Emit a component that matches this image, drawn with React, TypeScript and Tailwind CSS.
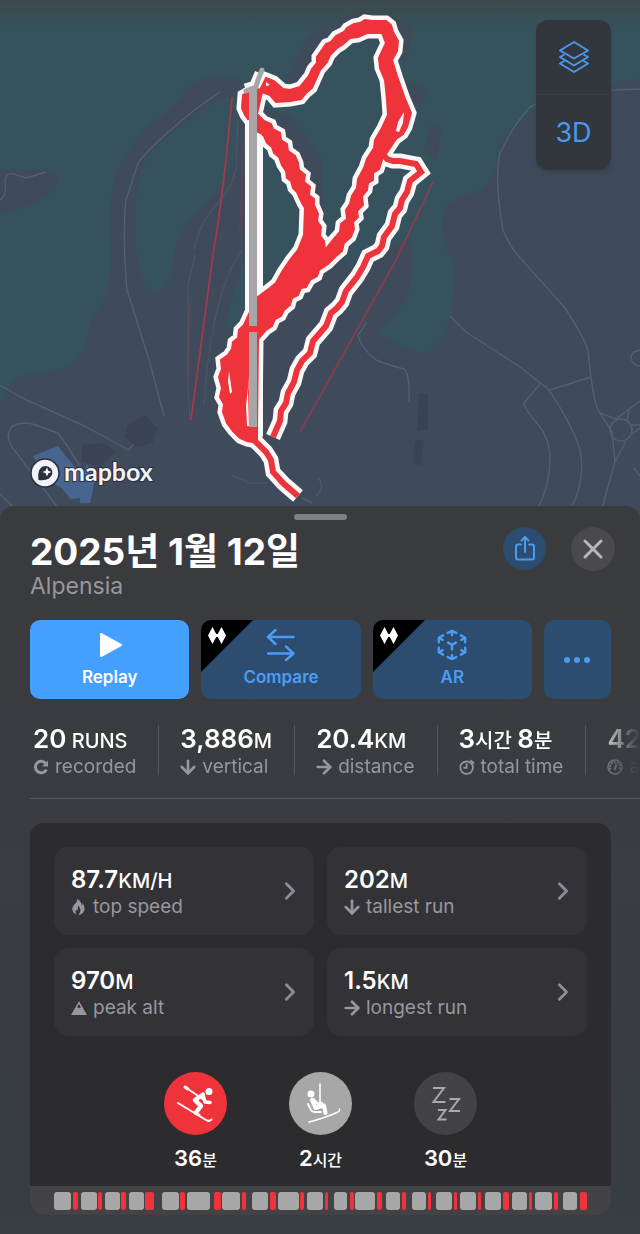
import type { ReactNode } from "react"
import { ArrowDown, ArrowRight, ChevronRight, X } from "lucide-react"

type Stat = { id: string; parts: [string, string][]; label: string; icon: ReactNode }

const RedoIcon = () => (
    <svg viewBox="0 0 16 16" className="size-4" fill="none" stroke="currentColor" strokeWidth="3">
        <path d="M13.4 10.6A5.8 5.8 0 1 1 12.6 4.2" />
        <path d="M15 1.5V7.6H9Z" fill="currentColor" stroke="none" />
    </svg>
)

const TimerIcon = () => (
    <svg viewBox="0 0 16 16" className="size-4" fill="none" stroke="currentColor" strokeWidth="1.7">
        <circle cx="7.6" cy="8.6" r="6.3" />
        <path d="M7.6 4.5V8.8H4.4M11.5 1.2L15 4.6M12.8 3.8L14.2 2.4" />
    </svg>
)

const GaugeIcon = () => (
    <svg viewBox="0 0 16 16" className="size-4" fill="none" stroke="currentColor" strokeWidth="1.5">
        <circle cx="8" cy="8" r="7" />
        <path d="M3.6 10.5A5 5 0 1 1 12.4 10.5" strokeWidth="2" strokeDasharray="2 1" />
        <path d="M7.6 11L9.4 5.4" strokeWidth="2" />
    </svg>
)

const FlameIcon = () => (
    <svg viewBox="0 0 16 18" className="h-[18px] w-4" fill="currentColor">
        <path d="M6 1C7 4.7 2 6.3 1.4 10.2C1 13.2 3 15.600 5.500 16.400C4.300 14.600 4.200 13 5.200 11.400C5.600 12.600 6.200 12.800 6.600 12C7.400 10.400 6.400 9.200 7.800 7.400C8.200 10 9.700 10.400 9.400 12.800C9.200 14.600 8.400 15.600 7.400 17C11.400 16 13.600 13.800 13.600 10.400C13.600 8.400 12.300 7.200 11.800 4.800C11.200 6.200 11.400 7.200 11 7.800C10.200 5.600 10 2.600 6 1Z" />
    </svg>
)

const PeakIcon = () => (
    <svg viewBox="0 0 16 16" className="size-4">
        <path d="M8 1L16 15H0Z" fill="currentColor" />
        <path d="M8 4L10.2 7.8L9 7.2L8 8.4L7 7.2L5.8 7.8Z" fill="#333236" />
    </svg>
)

const DownIcon = () => <ArrowDown className="size-4" strokeWidth={3} viewBox="3 3 18 18" />
const RightIcon = () => <ArrowRight className="size-4" strokeWidth={3} viewBox="3 3 18 18" />

const stats: Stat[] = [
    { id: "runs", parts: [["20", " RUNS"]], label: "recorded", icon: <RedoIcon /> },
    { id: "vertical", parts: [["3,886", "M"]], label: "vertical", icon: <DownIcon /> },
    { id: "distance", parts: [["20.4", "KM"]], label: "distance", icon: <RightIcon /> },
    { id: "time", parts: [["3", "시간 "], ["8", "분"]], label: "total time", icon: <TimerIcon /> },
    { id: "speed", parts: [["42.1", "KM/H"]], label: "avg speed", icon: <GaugeIcon /> },
]

const tiles: Stat[] = [
    { id: "top", parts: [["87.7", "KM/H"]], label: "top speed", icon: <FlameIcon /> },
    { id: "tallest", parts: [["202", "M"]], label: "tallest run", icon: <DownIcon /> },
    { id: "peak", parts: [["970", "M"]], label: "peak alt", icon: <PeakIcon /> },
    { id: "longest", parts: [["1.5", "KM"]], label: "longest run", icon: <RightIcon /> },
]

// One entry per lift + run: lift, pause, run, pause
const timeline = [
    [17, 2, 5, 3], [16, 1, 4, 3], [15, 1, 5, 3], [15, 1, 9, 8], [17, 1, 5, 2],
    [23, 4, 7, 1], [18, 2, 4, 6], [16, 2, 6, 2], [21, 1, 4, 3], [16, 2, 3, 6],
    [13, 3, 4, 1], [20, 2, 5, 4], [14, 2, 4, 6], [14, 2, 3, 5], [16, 2, 3, 3],
    [16, 2, 3, 4], [16, 2, 6, 3], [15, 2, 3, 3], [17, 2, 4, 5], [14, 3, 7, 0],
]

// Outline of the merged runs, then the ground they enclose
const runs =
    "M266 78L274 81L283 89L290 90L300 87L309 76L312 69L317 63V57L326 44L331 42L336 36L344 32L347 28L354 24L360 23L365 20L372 21H386L391 25L393 32L398 41L397 51L392 60L397 76L405 99L411 113L407 127L403 134L396 139L388 151L382 160L379 169L373 173L373 180L368 183L367 190L362 196L363 205L357 211L358 217L353 222L354 229L351 237L344 243L342 251L336 256L328 264L319 270L317 276L310 280L306 287L301 288L298 295L292 298L290 305L284 310L281 316L275 319L272 326L266 330L258 339L257 428L257 443L247 441L240 438L233 431L227 423L223 412L224 404L220 397L222 388L219 377L222 369L221 360L228 355L232 349L233 342L238 338L239 330L244 325L250 312L258 297L270 288L276 283L282 272L290 260L298 250L304 235L305 208L302 203L297 192L293 188L291 181L287 178L286 171L282 165L279 157L274 153L272 147L267 143L264 136L258 132L245 115L242 108L243 95L255 88L260 90Z" +
    "M262 92L270 95L276 102L290 101L301 99L306 93L312 88L316 79L320 70L327 62L330 55L337 48L342 45L350 38L358 37L367 33H382L386 43L379 58L380 68L385 80L387 100L388 115L382 128L375 140L374 148L367 159L364 168L358 179L357 188L352 196L350 204L346 210L347 219L341 224L340 232L333 240L325 250L324 241L320 236L321 227L317 221L318 214L314 205L314 199L309 195L310 187L304 182L305 175L299 170L298 163L295 156L288 151L287 144L281 140L280 133L273 129L271 124L264 121L257 114Z"

const spur = "M383 154L387 159L393 161L400 161L416 164L421 172L410 181L407 192L402 200L400 208L395 214L392 226L384 237L382 246L378 251L368 256L363 267L357 277L346 291L342 302L337 308L331 313L326 326L320 333L313 341L310 353L302 361L297 370L294 382L288 393L286 403L281 411L280 421L273 437"
const tail = "M254 440L266 452L271 460L273 472L284 484L298 496"

const TrailMap = () => (
    <svg viewBox="0 0 640 524" className="block h-auto w-full" role="img" aria-label="Ski tracks">
        <defs>
            <linearGradient id="fade" x1="0" y1="0" x2="0" y2="1">
                <stop offset="0" stopColor="#3c494b" />
                <stop offset="1" stopColor="#3c494b" stopOpacity="0" />
            </linearGradient>
        </defs>
        <rect width="640" height="524" fill="#36525c" />

        {/* open ground */}
        <g fill="#3f4a5b">
            <path d="M0 410Q6 378 28 375L62 369Q82 362 88 335Q90 318 102 304Q112 292 111 250Q108 190 118 172Q126 150 150 125Q176 108 190 86Q202 74 240 79L250 300L330 250L345 210L380 150L395 165L360 240L345 268L385 250L410 235Q416 265 409 285Q406 310 380 328Q374 332 390 340Q412 352 423 354Q444 346 450 318Q456 290 455 266Q436 232 446 208Q452 198 480 191Q496 178 500 150Q506 130 530 112Q560 92 600 88Q625 78 640 80V524H0Z" />
            <path d="M0 170L45 170Q62 174 57 184Q46 204 0 214Z" />
            <path d="M310 34L360 10L390 16L415 28L405 60L340 70L300 90L285 80Z" />
            <path d="M405 80L428 90L420 108L405 102ZM430 125L442 128L436 160L424 150Z" />
            <path d="M262 110L290 115L322 160L328 250L310 220L290 160Z" />
        </g>
        <g fill="#36525c">
            <path d="M143 163Q160 140 190 118L215 101L238 96V150Q230 178 207 203Q182 226 176 245Q172 290 155 293Q140 290 137 255Q130 200 143 163Z" />
            <path d="M262 135L285 170L303 205L302 235L285 265L262 290ZM246 250V312L229 335L226 320Z" />
            <path d="M378 40L385 85V112L350 180L328 240L322 200L322 160L300 125L290 112L305 100L350 42Z" />
            <path d="M366 190L385 165L412 170L395 205L366 250L345 262Z" />
        </g>
        <g fill="#3a4355">
            <path d="M128 425L145 415L157 428L153 442L138 447L124 437Z" />
            <path d="M82 445L104 443L116 452L100 466L82 462ZM419 393H428V430H417ZM416 440H424L420 466L412 462Z" />
        </g>
        <path d="M33 456L58 446L64 454L82 475L87 464L95 480L90 503H80V498L70 499L62 488L50 482Z" fill="#466690" />

        {/* roads */}
        <g fill="none" stroke="#56647a" strokeWidth="1.4" opacity="0.85">
            <path d="M220 92L197 108Q150 146 138 163L126 200Q122 235 127 290L150 363L164 416" />
            <path d="M0 200Q7 197 5 180Q6 172 14 174L26 178L46 172" />
            <path d="M0 385L22 398L80 424L105 437L128 450L133 445" />
            <path d="M58 508L12 447Q4 434 13 426Q25 420 38 426L58 433L66 444L80 466M0 494L14 508" />
            <path d="M367 322L358 335Q360 347 376 360Q388 365 404 369Q410 374 409 402" />
            <path d="M450 316L466 332L520 367L548 389Q572 424 580 450Q586 480 571 508M540 384L524 403Q524 408 536 422Q550 438 550 458Q550 485 538 508M550 390L591 377" />
            <path d="M640 89L590 91L548 98L530 107Q514 124 500 153Q494 180 503 230Q510 248 524 262L565 308Q588 344 588 352Q593 400 598 410L612 432L615 462L602 508" />
            <circle cx="621" cy="430" r="11" />
            <path d="M600 413L616 419L640 401M629 410L627 421M632 425H640M632 434L640 428M626 441L615 462M302 498L312 503M634 468L640 476M640 350Q631 352 631 358Q632 365 640 366" />
            <path d="M231 475L250 483H268M195 255L188 285V390L190 420M238 120L236 170Q232 188 214 208Q200 222 194 250M242 250Q212 290 204 405" opacity="0.5" />
            <path d="M318 478Q326 486 316 496" opacity="0.7" />
        </g>
        <g fill="none" stroke="#9c3b49" strokeWidth="2">
            <path d="M232 97Q224 190 213 255L191 420" />
            <path d="M433 182L396 260L300 432" opacity="0.7" />
            <path d="M245 120L240 230M190 300L188 380M296 246L280 275" opacity="0.3" />
        </g>
        <rect width="640" height="28" fill="url(#fade)" />

        {/* white casing below the tracks */}
        <g fill="none" stroke="#fbf8fa" strokeLinejoin="miter">
            <path d={runs} strokeWidth="11" />
            <path d={spur} strokeWidth="15" />
            <path d={tail} strokeWidth="15" />
            <path d="M254 110V436" strokeWidth="18" />
            <path d="M246 91L256 88L262 74" strokeWidth="15" />
        </g>
        <path d={runs} fill="#ee333b" fillRule="evenodd" stroke="#ee333b" strokeWidth="2" />
        <g fill="none" stroke="#ee333b" strokeWidth="6">
            <path d={spur} />
            <path d={tail} />
        </g>
        <path d="M404 112L398 122L396 131L399 132L403 123ZM229 371L232 392L230 394L228 381ZM250 369L248 392L249 426H247L246 406ZM266 82L270 85L266 86Z" fill="#fbf8fa" />
        <path d="M245 120V308L250 302V120ZM258 133V295L262 291V135Z" fill="#fbf8fa" />
        <g fill="none" stroke="#a5a6a5" strokeWidth="8">
            <path d="M253 88V326M253 332V427" />
            <path d="M246 91L256 87L258 80L262 70" strokeWidth="5" strokeLinecap="round" />
        </g>
    </svg>
)

const MapboxLogo = () => (
    <a href="#" className="absolute bottom-[34px] left-[30px] flex items-center gap-1">
        <svg viewBox="0 0 30 30" className="size-[30px]" aria-hidden="true">
            <circle cx="15" cy="15" r="14" fill="#f1f3f8" stroke="#29303b" strokeWidth="1.5" />
            <path d="M8.4 22Q7 11.500 12.600 8.600Q17.500 6.500 21 10.500Q24 15 20.500 19Q16.500 23 8.400 22Z" fill="#29323f" />
            <path d="M17 9.500L18.300 12.700L21.500 14L18.300 15.300L17 18.500L15.700 15.300L12.500 14L15.700 12.700Z" fill="#fff" />
        </svg>
        <span className="mb-1 font-['Lato',sans-serif] text-[25px] leading-[30px] font-bold text-[#f1f3f8] [-webkit-text-stroke:2px_#29303b] [paint-order:stroke_fill]">mapbox</span>
    </a>
)

const Value = ({ parts, size }: { parts: [string, string][]; size: "lg" | "md" }) => (
    <span className={size === "lg" ? "text-[26px] leading-7 font-semibold text-white" : "text-[24px] leading-7 font-semibold text-white"}>
        {parts.map(([num, unit]) => (
            <span key={num} className="whitespace-pre">
                {num}
                <span className="text-[20px] font-medium">{unit}</span>
            </span>
        ))}
    </span>
)

const Label = ({ icon, children }: { icon: ReactNode; children: ReactNode }) => (
    <span className="flex items-center gap-[6px] text-[19px] leading-6 whitespace-nowrap text-[#97979d]">
        {icon}
        {children}
    </span>
)

// Black corner with the double diamond of the paid tier
const ProCorner = () => (
    <svg viewBox="0 0 52 52" className="absolute top-0 left-0 size-[52px]" aria-hidden="true">
        <path d="M0 0H52L0 52Z" fill="#000" />
        <path d="M11.500 7L16 15.500L11.500 24L7 15.500ZM20.500 7L25 15.500L20.500 24L16 15.500Z" fill="#fff" />
        <path d="M14 15.500H18" stroke="#fff" strokeWidth="3" />
    </svg>
)

const actionClass =
    "relative flex flex-1 flex-col items-center overflow-hidden rounded-[10px] bg-[#2c4d70] pt-[9px] text-[17px] leading-6 font-semibold text-[#4d9cf3]"

const Activity = ({ circle, icon, value }: { circle: string; icon: ReactNode; value: [string, string] }) => (
    <li className="flex w-[63px] flex-col items-center">
        <span className={circle}>{icon}</span>
        <span className="mt-[9px] h-7 text-[22px] leading-7 font-semibold whitespace-nowrap text-white">
            {value[0]}
            <span className="text-[16px] font-medium">{value[1]}</span>
        </span>
    </li>
)

export default function App() {
    return (
        <main className="min-h-screen overflow-hidden bg-[#383d41] font-['Inter','Noto_Sans_CJK_KR',sans-serif]">
            <section className="relative">
                <TrailMap />
                <MapboxLogo />
                <div className="absolute top-5 right-[29px] flex w-[75px] flex-col rounded-xl bg-[#31373d] text-[#4b97ee] shadow-md">
                    <button type="button" aria-label="Map layers" className="flex h-[75px] items-center justify-center border-b border-[#363d43]">
                        <svg viewBox="0 0 32 34" className="h-[34px] w-8" fill="none" stroke="currentColor" strokeWidth="2" strokeLinejoin="round">
                            <path d="M16 2L30 10.500L16 18.500L2 10.500Z" />
                            <path d="M6.500 14.500L2 17L16 25.500L30 17L25.500 14.500" />
                            <path d="M6.500 21L2 23.500L16 32L30 23.500L25.500 21" />
                        </svg>
                    </button>
                    <button type="button" className="h-[75px] text-[27px] leading-8">3D</button>
                </div>
            </section>

            <section className="relative -mt-[18px] rounded-t-[14px] bg-linear-to-b from-[#3a3b3f] to-[#383d41] pt-2 pb-[19px]">
                <div className="mx-auto h-[6px] w-[53px] rounded-full bg-[#7f8084]" />

                <header className="mt-[7px] flex items-start pr-[25px] pl-[30px]">
                    <div className="flex-1 pt-[5px]">
                        <h1 className="text-[37px] leading-10 font-bold text-white">2025년 1월 12일</h1>
                        <p className="text-[23px] leading-7 text-[#97989c]">Alpensia</p>
                    </div>
                    <button type="button" aria-label="Share" className="mr-[25px] flex size-[43px] items-center justify-center rounded-full bg-[#2c4d70] text-[#4d9cf3]">
                        <svg viewBox="0 0 24 28" className="h-7 w-6" fill="none" stroke="currentColor" strokeWidth="2" strokeLinecap="round" strokeLinejoin="round">
                            <path d="M8 9.500H5Q3 9.500 3 11.500V22.500Q3 24.500 5 24.500H19Q21 24.500 21 22.500V11.500Q21 9.500 19 9.500H16M12 17V2.500M8.500 5.500L12 2L15.500 5.500" />
                        </svg>
                    </button>
                    <button type="button" aria-label="Close" className="flex size-11 items-center justify-center rounded-full bg-[#4a494d] text-[#b7b7ba]">
                        <X className="size-8" strokeWidth={2.2} />
                    </button>
                </header>

                <div className="mt-5 flex h-[79px] gap-3 pr-[29px] pl-[30px]">
                    <button type="button" className="flex flex-1 flex-col items-center rounded-[10px] bg-[#449ffe] pt-[9px] text-[17px] leading-6 font-semibold text-white">
                        <svg viewBox="0 0 32 32" className="mb-[4px] h-8 w-8" fill="currentColor" stroke="currentColor" strokeWidth="2" strokeLinejoin="round">
                            <path d="M7 5V27L27 16Z" />
                        </svg>
                        Replay
                    </button>
                    <button type="button" className={actionClass}>
                        <ProCorner />
                        <svg viewBox="0 0 32 32" className="mb-[4px] size-8" fill="none" stroke="currentColor" strokeWidth="2.400" strokeLinecap="round" strokeLinejoin="round">
                            <path d="M28.500 8H3M10.500 1L3 8L10.500 15M3 24.500H28.500M21 17.500L28.500 24.500L21 31" />
                        </svg>
                        Compare
                    </button>
                    <button type="button" className={actionClass}>
                        <ProCorner />
                        <svg viewBox="0 0 32 34" className="mb-[4px] size-8" fill="none" stroke="currentColor" strokeWidth="2.600" strokeLinecap="round" strokeLinejoin="round">
                            <path d="M11.500 4.200L16 2L20.500 4.200M16 2V6.500" />
                            <path d="M11.500 29.800L16 32L20.500 29.800M16 32V27.500" />
                            <path d="M25.500 6.800L30 9.300V14M30 9.300L26 11.500" />
                            <path d="M6.500 6.800L2 9.300V14M2 9.300L6 11.500" />
                            <path d="M25.500 27.200L30 24.700V20M30 24.700L26 22.500" />
                            <path d="M6.500 27.200L2 24.700V20M2 24.700L6 22.500" />
                            <path d="M12 14.500L16 17L20 14.500M16 17V21.500" />
                        </svg>
                        AR
                    </button>
                    <button type="button" aria-label="More" className="flex w-[67px] items-center justify-center gap-1 rounded-[10px] bg-[#2c4d70]">
                        <span className="size-[6px] rounded-full bg-[#4d9cf3]" />
                        <span className="size-[6px] rounded-full bg-[#4d9cf3]" />
                        <span className="size-[6px] rounded-full bg-[#4d9cf3]" />
                    </button>
                </div>

                <div className="mt-[18px] ml-[30px] border-b border-[#55585c] pb-[15px]">
                    <ul className="flex overflow-hidden py-2 pl-[3px] [mask-image:linear-gradient(to_left,transparent,black_48px)]">
                        {stats.map(({ id, parts, label, icon }) => (
                            <li key={id} className="mr-[21px] flex h-[50px] shrink-0 flex-col border-r border-[#55585c] pr-[22px] last:border-0">
                                <Value parts={parts} size="lg" />
                                <Label icon={icon}>{label}</Label>
                            </li>
                        ))}
                    </ul>
                </div>

                <div className="mt-6 mr-[29px] ml-[30px] overflow-hidden rounded-[14px] bg-[#2c2b2e]">
                    <div className="grid grid-cols-2 gap-[13px] px-6 pt-6">
                        {tiles.map(({ id, parts, label, icon }) => (
                            <button key={id} type="button" className="flex h-[88px] items-center justify-between rounded-[14px] bg-[#333236] pr-3 pl-[17px] text-left">
                                <span className="flex flex-col pt-[2px]">
                                    <Value parts={parts} size="md" />
                                    <Label icon={icon}>{label}</Label>
                                </span>
                                <ChevronRight className="size-6 text-[#8d8c92]" strokeWidth={2.4} viewBox="2 2 20 20" />
                            </button>
                        ))}
                    </div>

                    <ul className="mt-9 flex justify-center gap-[62px]">
                        <Activity
                            circle="flex size-[63px] items-center justify-center rounded-full bg-[#ee333b]"
                            value={["36", "분"]}
                            icon={
                                <svg viewBox="0 0 63 63" className="size-[63px]" fill="none" stroke="#fff" strokeLinecap="round" strokeLinejoin="round">
                                    <circle cx="45" cy="19.500" r="3.500" fill="#fff" stroke="none" />
                                    <path d="M14 31L42 48Q45 50 47.500 47.500" strokeWidth="2" />
                                    <path d="M21 15L43 30" strokeWidth="1.600" />
                                    <path d="M21 15L24 17" strokeWidth="3" />
                                    <path d="M39 22.500L31 28L37 34L32 40.500" strokeWidth="4.500" />
                                    <path d="M39 23L41 30L46 30.500" strokeWidth="3.500" />
                                    <path d="M31 41L35 43" strokeWidth="3" />
                                </svg>
                            }
                        />
                        <Activity
                            circle="flex size-[63px] items-center justify-center rounded-full bg-[#a7a7a7]"
                            value={["2", "시간"]}
                            icon={
                                <svg viewBox="0 0 63 63" className="size-[63px]" fill="none" stroke="#fff" strokeLinecap="round" strokeLinejoin="round">
                                    <circle cx="22" cy="22" r="3.500" fill="#fff" stroke="none" />
                                    <path d="M31 12V31" strokeWidth="1.600" />
                                    <path d="M19 32L22 38Q23 40 26 40H32" strokeWidth="1.800" />
                                    <path d="M23 28L26.500 36L35 33.500L36.500 41" strokeWidth="4" />
                                    <path d="M24 27L29 32L33 31" strokeWidth="2.500" />
                                    <path d="M20 50Q36 46 49 40Q51 39 50.500 37" strokeWidth="1.400" />
                                </svg>
                            }
                        />
                        <Activity
                            circle="flex size-[63px] items-center justify-center rounded-full bg-[#434247]"
                            value={["30", "분"]}
                            icon={
                                <svg viewBox="0 0 63 63" className="size-[63px]" fill="none" stroke="#a9a8ad" strokeWidth="2">
                                    <path d="M19 16H30L19.500 30H31.500" />
                                    <path d="M35.500 27H45L36 39H46" />
                                    <path d="M24 38H31.500L24.500 47.500H32.500" />
                                </svg>
                            }
                        />
                    </ul>

                    <div className="mt-[14px] flex h-[29px] items-center bg-[#434247] px-6">
                        {timeline.map(([lift, wait, run, rest], i) => (
                            <div key={i} className="flex h-[18px] basis-0" style={{ flexGrow: lift + wait + run + rest }}>
                                <span className="basis-0 rounded-[3px] bg-[#a7a7a7]" style={{ flexGrow: lift }} />
                                <span className="basis-0" style={{ flexGrow: wait }} />
                                <span className="basis-0 rounded-[2px] bg-[#ee333b]" style={{ flexGrow: run }} />
                                <span className="basis-0" style={{ flexGrow: rest }} />
                            </div>
                        ))}
                    </div>
                </div>
            </section>
        </main>
    )
}
